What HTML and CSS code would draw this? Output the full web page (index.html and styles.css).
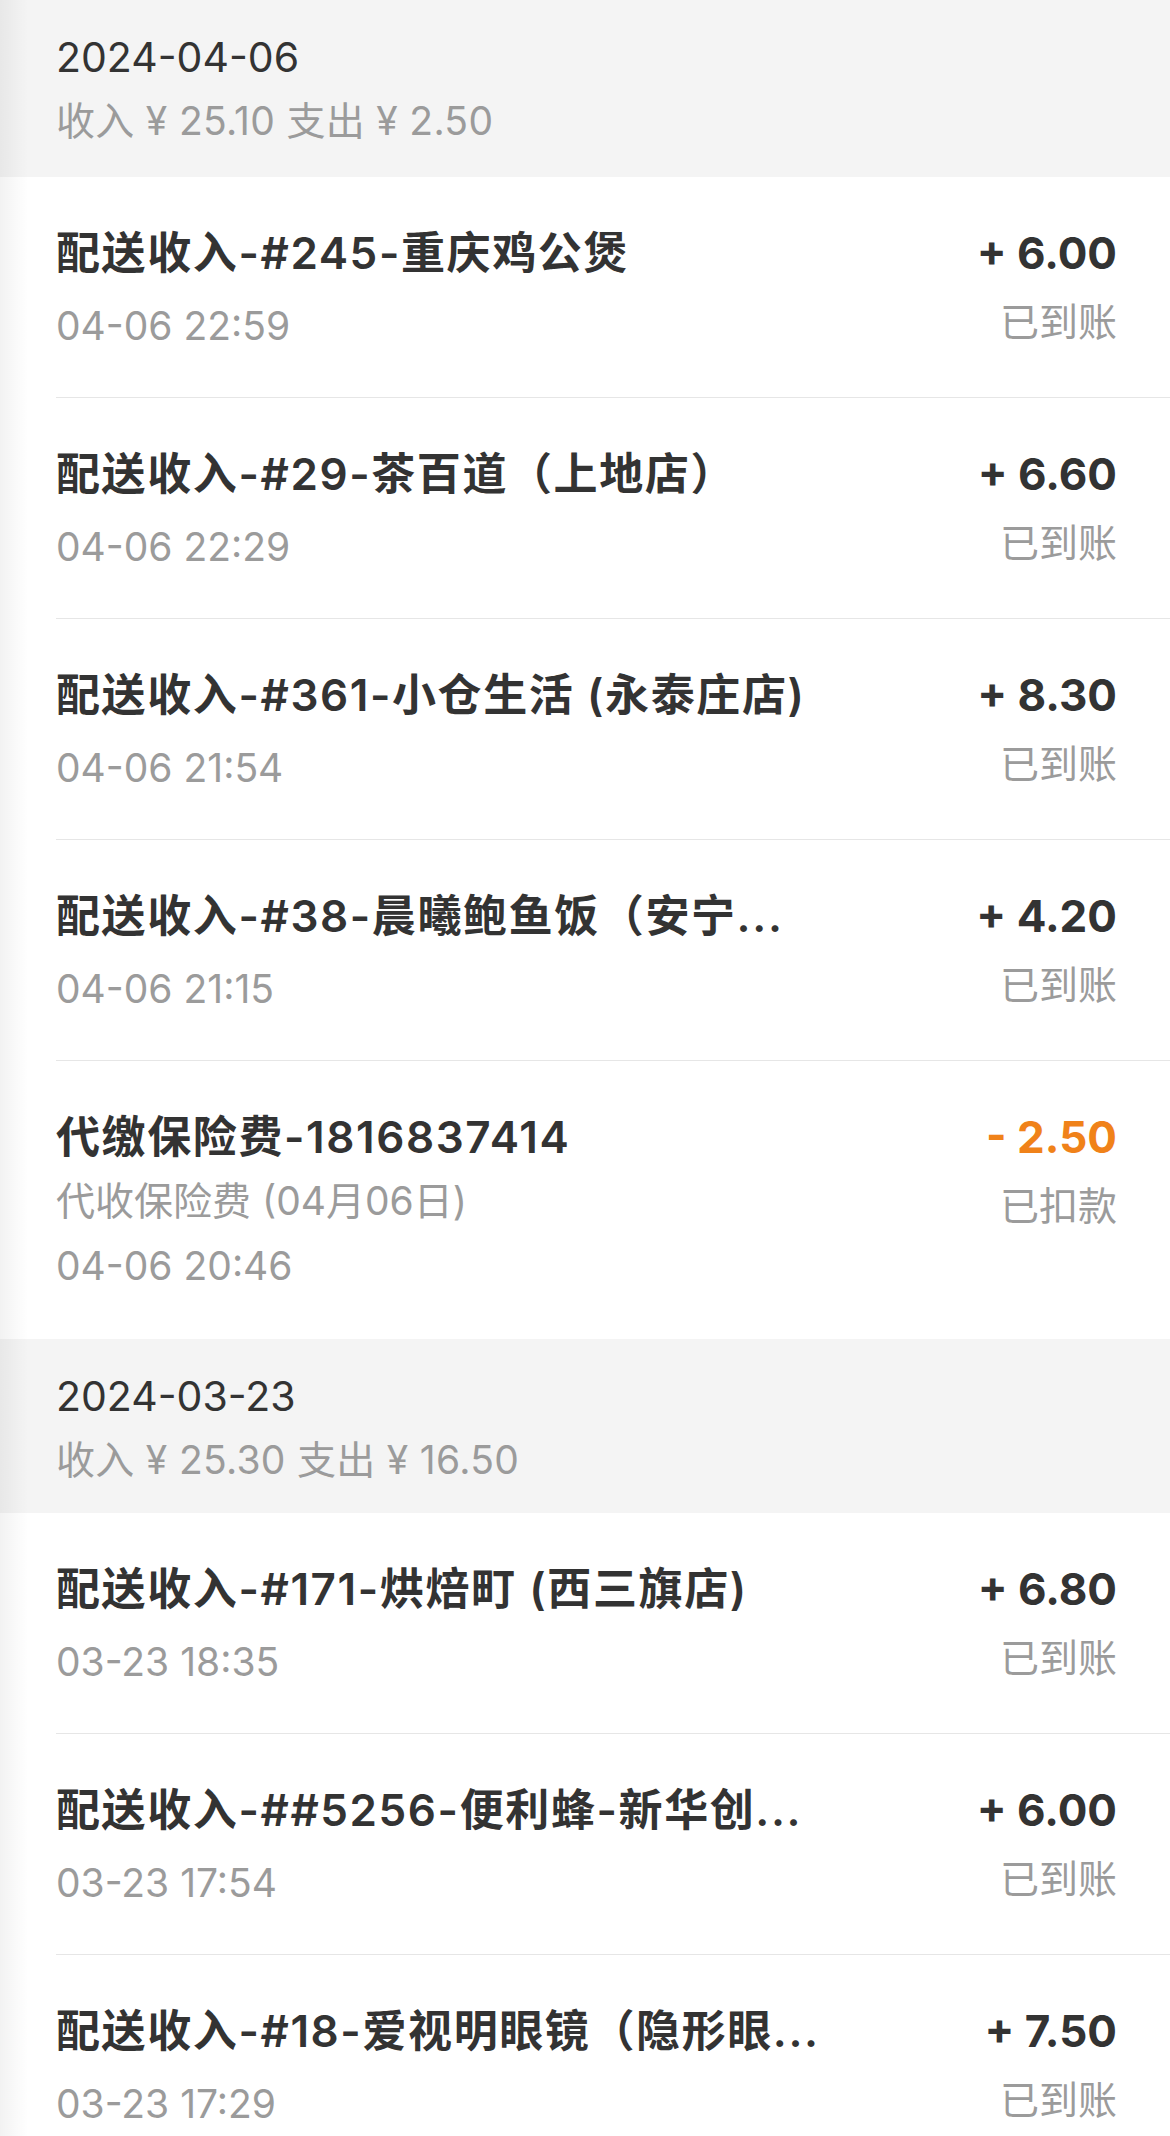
FILE: index.html
```html
<!DOCTYPE html>
<html lang="zh-CN">

<head>
  <meta charset="UTF-8">
  <meta name="viewport" content="width=device-width, initial-scale=1.0">
  <title>账单明细</title>
  <link rel="stylesheet" href="styles.css">
</head>

<body>
  <div class="page">

    <section class="day">
      <div class="day-head">
        <p class="day-date">2024-04-06</p>
        <p class="day-sum">收入 ¥ 25.10 支出 ¥ 2.50</p>
      </div>
      <ul class="bills">
        <li class="bill">
          <div class="bill-info">
            <p class="bill-title">配送收入-#245-重庆鸡公煲</p>
            <p class="bill-time">04-06 22:59</p>
          </div>
          <div class="bill-money">
            <p class="amount">+ 6.00</p>
            <p class="state">已到账</p>
          </div>
        </li>
        <li class="bill">
          <div class="bill-info">
            <p class="bill-title">配送收入-#29-茶百道（上地店）</p>
            <p class="bill-time">04-06 22:29</p>
          </div>
          <div class="bill-money">
            <p class="amount">+ 6.60</p>
            <p class="state">已到账</p>
          </div>
        </li>
        <li class="bill">
          <div class="bill-info">
            <p class="bill-title">配送收入-#361-小仓生活 (永泰庄店)</p>
            <p class="bill-time">04-06 21:54</p>
          </div>
          <div class="bill-money">
            <p class="amount">+ 8.30</p>
            <p class="state">已到账</p>
          </div>
        </li>
        <li class="bill">
          <div class="bill-info">
            <p class="bill-title">配送收入-#38-晨曦鲍鱼饭（安宁...</p>
            <p class="bill-time">04-06 21:15</p>
          </div>
          <div class="bill-money">
            <p class="amount">+ 4.20</p>
            <p class="state">已到账</p>
          </div>
        </li>
        <li class="bill">
          <div class="bill-info">
            <p class="bill-title">代缴保险费-1816837414</p>
            <p class="bill-sub">代收保险费 (04月06日)</p>
            <p class="bill-time">04-06 20:46</p>
          </div>
          <div class="bill-money">
            <p class="amount out">- 2.50</p>
            <p class="state">已扣款</p>
          </div>
        </li>
      </ul>
    </section>

    <section class="day">
      <div class="day-head">
        <p class="day-date">2024-03-23</p>
        <p class="day-sum">收入 ¥ 25.30 支出 ¥ 16.50</p>
      </div>
      <ul class="bills">
        <li class="bill">
          <div class="bill-info">
            <p class="bill-title">配送收入-#171-烘焙町 (西三旗店)</p>
            <p class="bill-time">03-23 18:35</p>
          </div>
          <div class="bill-money">
            <p class="amount">+ 6.80</p>
            <p class="state">已到账</p>
          </div>
        </li>
        <li class="bill">
          <div class="bill-info">
            <p class="bill-title">配送收入-##5256-便利蜂-新华创...</p>
            <p class="bill-time">03-23 17:54</p>
          </div>
          <div class="bill-money">
            <p class="amount">+ 6.00</p>
            <p class="state">已到账</p>
          </div>
        </li>
        <li class="bill">
          <div class="bill-info">
            <p class="bill-title">配送收入-#18-爱视明眼镜（隐形眼...</p>
            <p class="bill-time">03-23 17:29</p>
          </div>
          <div class="bill-money">
            <p class="amount">+ 7.50</p>
            <p class="state">已到账</p>
          </div>
        </li>
      </ul>
    </section>

  </div>
</body>

</html>
```

FILE: styles.css
```css
body {
  margin: 0;
  font-family: Inter, "Noto Sans CJK SC", sans-serif;
  background-color: #fff;
  color: #333;
}

p {
  margin: 0;
}

.page {
  position: relative;
  width: 1170px;
  overflow: hidden;
}

/* sombra leve na borda esquerda */
.page::after {
  content: "";
  position: absolute;
  left: 0;
  top: 0;
  bottom: 0;
  width: 28px;
  background: linear-gradient(to right, rgba(0, 0, 0, 0.05), rgba(0, 0, 0, 0));
  pointer-events: none;
}

.day-head {
  background-color: #f4f4f4;
  padding: 25px 56px 21px;
}

.day:first-child .day-head {
  padding-bottom: 24px;
}

.day-date {
  font-size: 41px;
  line-height: 64px;
  color: #333;
}

.day-sum {
  font-size: 39px;
  line-height: 64px;
  letter-spacing: 0.3px;
  color: #9b9b9b;
}

.bills {
  list-style: none;
  margin: 0;
  padding: 0;
}

.bill {
  display: flex;
  justify-content: space-between;
  margin-left: 56px;
  padding: 44px 53px 39px 0;
  border-bottom: 1px solid #e6e6e6;
}

.bill:last-child {
  border-bottom: none;
  padding-bottom: 41px;
}

.bill-info {
  min-width: 0;
  flex: 1;
}

.bill-title {
  font-size: 44px;
  line-height: 64px;
  font-weight: 600;
  letter-spacing: 1.6px;
  color: #333;
  white-space: nowrap;
  overflow: hidden;
  text-overflow: ellipsis;
}

.bill-sub {
  font-size: 39px;
  line-height: 64px;
  color: #9b9b9b;
}

.bill-time {
  margin-top: 9px;
  font-size: 39px;
  line-height: 64px;
  color: #9b9b9b;
}

.bill-sub + .bill-time {
  margin-top: 1px;
}

.bill-money {
  flex-shrink: 0;
  margin-left: 40px;
  text-align: right;
}

.amount {
  font-size: 44px;
  line-height: 64px;
  font-weight: 700;
  color: #333;
}

.amount.out {
  color: #f08219;
}

.state {
  margin-top: 5px;
  font-size: 39px;
  line-height: 64px;
  color: #9b9b9b;
}
```
